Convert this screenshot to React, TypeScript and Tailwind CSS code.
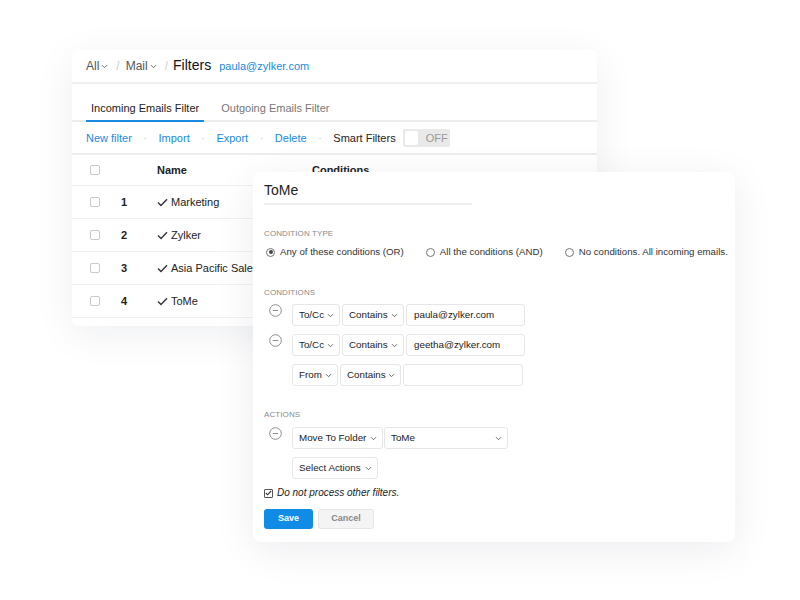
import React from "react";

const Chevron = () => (
  <svg width="7" height="5" viewBox="0 0 7 5" className="shrink-0">
    <path d="M1 1.2l2.5 2.5L6 1.2" fill="none" stroke="#666" strokeWidth="1" />
  </svg>
);

const Check = () => (
  <svg width="11" height="9" viewBox="0 0 11 9" className="shrink-0">
    <path d="M1 4.6l3 3L10 1.2" fill="none" stroke="#333" strokeWidth="1.4" />
  </svg>
);

const Minus = () => (
  <svg width="13" height="13" viewBox="0 0 13 13" className="shrink-0">
    <circle cx="6.5" cy="6.5" r="5.8" fill="none" stroke="#8c8c8c" strokeWidth="1" />
    <path d="M3.8 6.5h5.4" stroke="#8c8c8c" strokeWidth="1" />
  </svg>
);

function Box() {
  return <div className="w-[10px] h-[10px] rounded-[2px] border border-[#c9c9c9] bg-white shrink-0" />;
}

function Select({ label, w }: { label: string; w: string }) {
  return (
    <div className={`${w} h-[22px] shrink-0 bg-white border border-[#e6e6e6] rounded-[3px] flex items-center justify-between pl-[6px] pr-[5px] text-[9.8px] text-[#222] whitespace-nowrap`}>
      <span>{label}</span>
      <Chevron />
    </div>
  );
}

function Input({ value, w }: { value: string; w: string }) {
  return (
    <div className={`${w} h-[22px] shrink-0 bg-white border border-[#e6e6e6] rounded-[3px] flex items-center px-[7px] text-[9.8px] text-[#222] whitespace-nowrap`}>
      {value}
    </div>
  );
}

function Radio({ on, label }: { on?: boolean; label: string }) {
  return (
    <div className="flex items-center gap-[5px] shrink-0 whitespace-nowrap">
      <div className="w-[9px] h-[9px] rounded-full border border-[#777] flex items-center justify-center">
        {on && <div className="w-[4px] h-[4px] rounded-full bg-[#444]" />}
      </div>
      <span>{label}</span>
    </div>
  );
}

const rows = [
  { n: 1, name: "Marketing" },
  { n: 2, name: "Zylker" },
  { n: 3, name: "Asia Pacific Sales" },
  { n: 4, name: "ToMe" },
];

function FilterList() {
  return (
    <div className="absolute left-[72px] top-[50px] w-[525px] h-[276px] bg-white rounded-[6px] shadow-[0_8px_40px_rgba(20,30,60,0.07)] overflow-hidden text-[#222]">
      {/* breadcrumb */}
      <div className="h-[34px] flex items-center pl-[14px] border-b-2 border-[#ededed] text-[12px]">
        <span className="text-[#555]">All</span>
        <span className="ml-[2px] mt-[1px]"><Chevron /></span>
        <span className="text-[#cfcfcf] ml-[8px]">/</span>
        <span className="text-[#555] ml-[6px]">Mail</span>
        <span className="ml-[2px] mt-[1px]"><Chevron /></span>
        <span className="text-[#cfcfcf] ml-[8px]">/</span>
        <span className="text-[14px] text-[#111] ml-[5px] -mt-[2px]">Filters</span>
        <span className="text-[11px] text-[#1a8ae0] ml-[8px]">paula@zylker.com</span>
      </div>

      {/* tabs */}
      <div className="h-[38px] flex items-end pl-[14px] border-b-2 border-[#ededed] text-[11px] leading-[13px]">
        <div className="px-[5px] pb-[5px] border-b-2 border-[#1a8ae0] -mb-[2px] text-[#222]">Incoming Emails Filter</div>
        <div className="ml-[17px] pb-[5px] text-[#777]">Outgoing Emails Filter</div>
      </div>

      {/* toolbar */}
      <div className="h-[33px] flex items-center pl-[14px] pt-[1px] border-b-2 border-[#ededed] text-[11px]">
        <span className="text-[#1a8ae0]">New filter</span>
        <span className="text-[#ccc] mx-[11.5px]">·</span>
        <span className="text-[#1a8ae0]">Import</span>
        <span className="text-[#ccc] mx-[11.5px]">·</span>
        <span className="text-[#1a8ae0]">Export</span>
        <span className="text-[#ccc] mx-[11.5px]">·</span>
        <span className="text-[#1a8ae0]">Delete</span>
        <span className="text-[#ccc] mx-[11.5px]">·</span>
        <span className="text-[#222]">Smart Filters</span>
        <div className="ml-[7px] w-[47px] h-[18px] bg-[#e9e9e9] rounded-[2px] flex items-center pl-[2px]">
          <div className="w-[13px] h-[14px] bg-white rounded-[2px]" />
          <span className="ml-[8px] text-[#999] text-[11px]">OFF</span>
        </div>
      </div>

      {/* table header */}
      <div className="h-[31px] flex items-center pl-[18px] border-b border-[#f1f1f1] text-[11px] font-bold">
        <Box />
        <span className="ml-[57px]">Name</span>
        <span className="ml-[125px]">Conditions</span>
      </div>

      {rows.map((r) => (
        <div key={r.n} className="h-[33px] flex items-center pl-[18px] border-b border-[#f1f1f1] text-[11px]">
          <Box />
          <span className="ml-[21px] w-[36px] font-bold">{r.n}</span>
          <Check />
          <span className="ml-[3px] whitespace-nowrap">{r.name}</span>
        </div>
      ))}
    </div>
  );
}

function Label({ children }: { children: React.ReactNode }) {
  return <div className="text-[8px] leading-[10px] text-[#8a8a8a] tracking-[0.1px]">{children}</div>;
}

function FilterEditor() {
  return (
    <div className="absolute left-[253px] top-[172px] w-[482px] h-[370px] bg-white rounded-[8px] shadow-[0_8px_40px_rgba(20,30,60,0.08)] pl-[11px] pt-[10px] text-[#222]">
      <div className="w-[208px] pb-[5px] border-b-2 border-[#eeeeee] text-[14px] leading-[16px] font-medium">ToMe</div>

      <div className="mt-[24px]"><Label>CONDITION TYPE</Label></div>
      <div className="mt-[7px] pl-[2px] flex items-center gap-[22px] text-[9.7px] leading-[12px] text-[#333]">
        <Radio on label="Any of these conditions (OR)" />
        <Radio label="All the conditions (AND)" />
        <Radio label="No conditions. All incoming emails." />
      </div>

      <div className="mt-[30px]"><Label>CONDITIONS</Label></div>
      <div className="mt-[6px] flex flex-col gap-[8px]">
        <div className="flex items-start">
          <div className="w-[28px] pl-[5px]"><Minus /></div>
          <div className="flex gap-[2px]">
            <Select label="To/Cc" w="w-[48px]" />
            <Select label="Contains" w="w-[62px]" />
            <Input value="paula@zylker.com" w="w-[119px]" />
          </div>
        </div>
        <div className="flex items-start">
          <div className="w-[28px] pl-[5px]"><Minus /></div>
          <div className="flex gap-[2px]">
            <Select label="To/Cc" w="w-[48px]" />
            <Select label="Contains" w="w-[62px]" />
            <Input value="geetha@zylker.com" w="w-[119px]" />
          </div>
        </div>
        <div className="flex items-start">
          <div className="w-[28px]" />
          <div className="flex gap-[2px]">
            <Select label="From" w="w-[46px]" />
            <Select label="Contains" w="w-[61px]" />
            <Input value="" w="w-[120px]" />
          </div>
        </div>
      </div>

      <div className="mt-[24px]"><Label>ACTIONS</Label></div>
      <div className="mt-[7px] flex flex-col gap-[8px]">
        <div className="flex items-start">
          <div className="w-[28px] pl-[5px]"><Minus /></div>
          <div className="flex gap-[1px]">
            <Select label="Move To Folder" w="w-[91px]" />
            <Select label="ToMe" w="w-[124px]" />
          </div>
        </div>
        <div className="flex items-start">
          <div className="w-[28px]" />
          <Select label="Select Actions" w="w-[86px]" />
        </div>
      </div>

      <div className="mt-[8px] flex items-center gap-[4px] text-[10px] leading-[12px] italic text-[#222]">
        <div className="w-[9px] h-[9px] border border-[#555] rounded-[1px] flex items-center justify-center">
          <svg width="7" height="6" viewBox="0 0 7 6">
            <path d="M0.8 3l1.8 1.8L6.2 1" fill="none" stroke="#333" strokeWidth="1.1" />
          </svg>
        </div>
        <span>Do not process other filters.</span>
      </div>

      <div className="mt-[10px] flex items-center gap-[5px] text-[9px] font-bold">
        <div className="w-[49px] h-[20px] rounded-[3px] bg-[#108ce6] text-white flex items-center justify-center">Save</div>
        <div className="w-[56px] h-[20px] rounded-[3px] bg-[#f4f4f4] border border-[#e6e6e6] text-[#888] flex items-center justify-center">Cancel</div>
      </div>
    </div>
  );
}

export default function App() {
  return (
    <div className="relative w-[800px] h-[600px] bg-white overflow-hidden font-['Liberation_Sans',Arial,sans-serif]">
      <FilterList />
      <FilterEditor />
    </div>
  );
}
